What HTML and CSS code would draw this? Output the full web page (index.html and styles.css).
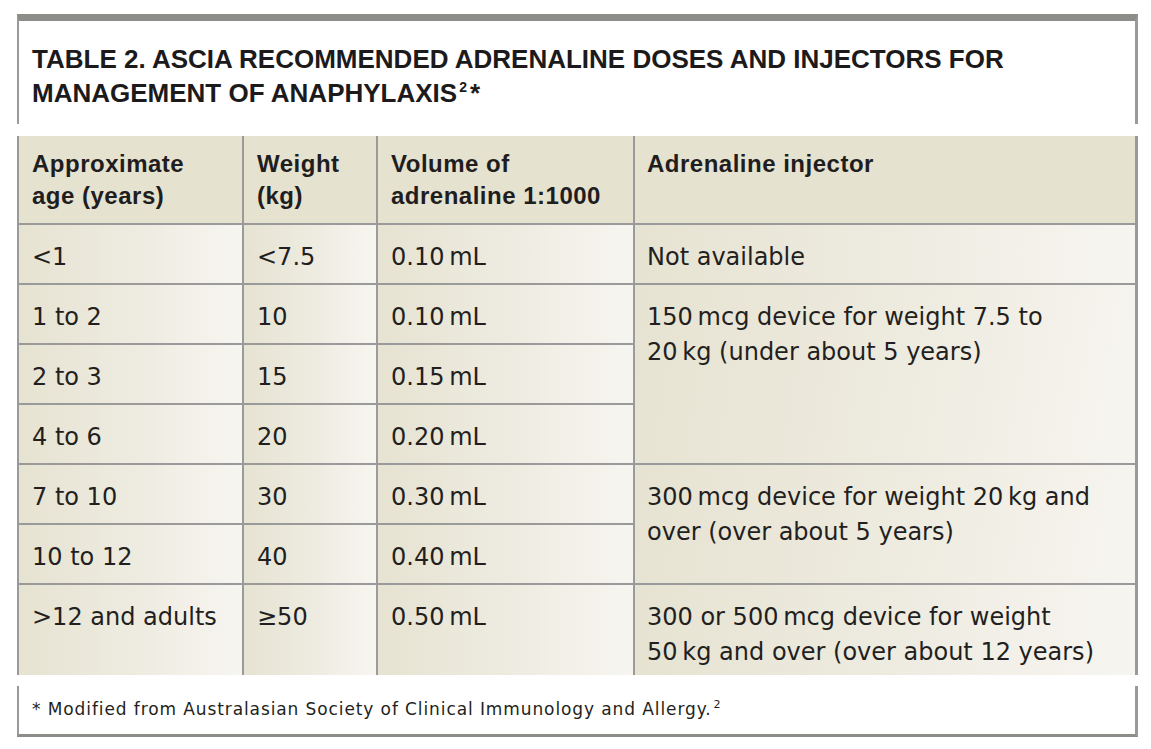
FILE: index.html
```html
<!DOCTYPE html>
<html>
<head>
<meta charset="utf-8">
<link rel="stylesheet" href="styles.css">
</head>
<body>
<div class="page">
  <div class="title-box">
    <h1 class="title">TABLE 2. ASCIA RECOMMENDED ADRENALINE DOSES AND INJECTORS FOR MANAGEMENT OF ANAPHYLAXIS<sup class="tsup">2</sup><span class="star">*</span></h1>
  </div>
  <div class="grid">
    <div class="cell head">Approximate<br>age (years)</div>
    <div class="cell head">Weight<br>(kg)</div>
    <div class="cell head">Volume of<br>adrenaline 1:1000</div>
    <div class="cell head last-col">Adrenaline injector</div>

    <div class="cell">&lt;1</div>
    <div class="cell">&lt;7.5</div>
    <div class="cell">0.10&#8201;mL</div>
    <div class="cell last-col">Not available</div>

    <div class="cell">1 to 2</div>
    <div class="cell">10</div>
    <div class="cell">0.10&#8201;mL</div>
    <div class="cell last-col span3">150&#8201;mcg device for weight 7.5 to<br>20&#8201;kg (under about 5 years)</div>

    <div class="cell">2 to 3</div>
    <div class="cell">15</div>
    <div class="cell">0.15&#8201;mL</div>

    <div class="cell">4 to 6</div>
    <div class="cell">20</div>
    <div class="cell">0.20&#8201;mL</div>

    <div class="cell">7 to 10</div>
    <div class="cell">30</div>
    <div class="cell">0.30&#8201;mL</div>
    <div class="cell last-col span2">300&#8201;mcg device for weight 20&#8201;kg and<br>over (over about 5 years)</div>

    <div class="cell">10 to 12</div>
    <div class="cell">40</div>
    <div class="cell">0.40&#8201;mL</div>

    <div class="cell last-row">&gt;12 and adults</div>
    <div class="cell last-row">&ge;50</div>
    <div class="cell last-row">0.50&#8201;mL</div>
    <div class="cell last-row last-col">300 or 500&#8201;mcg device for weight<br>50&#8201;kg and over (over about 12 years)</div>
  </div>
  <div class="foot">
    <p class="note">* Modified from Australasian Society of Clinical Immunology and Allergy.<sup class="fsup">2</sup></p>
  </div>
</div>
</body>
</html>
```
FILE: styles.css
```css
html, body {
  margin: 0;
  padding: 0;
  background: #ffffff;
}

.page {
  padding: 14px 13px 0 17px;
  width: 1121px;
  color: #231f20;
}

.title-box {
  border-top: 7px solid #8c8c89;
  border-left: 2px solid #9a9a9a;
  border-right: 3px solid #9a9a9a;
  padding: 21px 20px 14px 13px;
}

.title {
  margin: 0;
  font-family: "Liberation Sans", Arial, sans-serif;
  font-weight: 700;
  font-size: 26px;
  line-height: 34px;
  color: #1c1a1b;
}

.tsup {
  display: inline-block;
  font-size: 14px;
  line-height: 14px;
  vertical-align: 10px;
  margin-left: 2px;
  margin-right: 3px;
}

.star {
  display: inline-block;
}

.grid {
  margin-top: 12px;
  display: grid;
  grid-template-columns: 225px 134px 257px 500px;
  grid-template-rows: 89px repeat(6, 60px) 90px;
  border-left: 2px solid #9a9a9a;
  border-right: 3px solid #9a9a9a;
}

.cell {
  box-sizing: border-box;
  border-right: 2px solid #9a9a9a;
  border-bottom: 2px solid #9a9a9a;
  padding: 15px 8px 0 13px;
  font-family: "DejaVu Sans", sans-serif;
  font-size: 24px;
  line-height: 35px;
  color: #231f20;
  background: linear-gradient(to right, #e6e3d2 0%, #efede3 60%, #f7f5f0 100%);
}

.cell.head {
  background: #e5e2cf;
  font-family: "Liberation Sans", Arial, sans-serif;
  font-weight: 700;
  font-size: 24px;
  letter-spacing: 0.5px;
  line-height: 32px;
  padding-top: 12px;
  color: #1f1d1e;
}

.cell.last-col {
  border-right: none;
  padding-left: 12px;
}

.cell.last-row {
  border-bottom: none;
}

.span3 {
  grid-row: span 3;
  background: linear-gradient(100deg, #e6e3d2 0%, #eeebe0 55%, #f7f5f0 100%);
}

.span2 {
  grid-row: span 2;
  background: linear-gradient(100deg, #e6e3d2 0%, #eeebe0 55%, #f7f5f0 100%);
}

.foot {
  margin-top: 11px;
  border-left: 2px solid #9a9a9a;
  border-right: 3px solid #9a9a9a;
  border-bottom: 3px solid #8c8c89;
  height: 48px;
  box-sizing: content-box;
}

.note {
  margin: 0;
  padding: 13px 0 0 13px;
  font-family: "DejaVu Sans", sans-serif;
  font-size: 17px;
  letter-spacing: 0.9px;
  line-height: 20px;
  color: #231f20;
}

.fsup {
  display: inline-block;
  font-size: 11px;
  line-height: 11px;
  vertical-align: 7px;
  margin-left: 2px;
}
```
